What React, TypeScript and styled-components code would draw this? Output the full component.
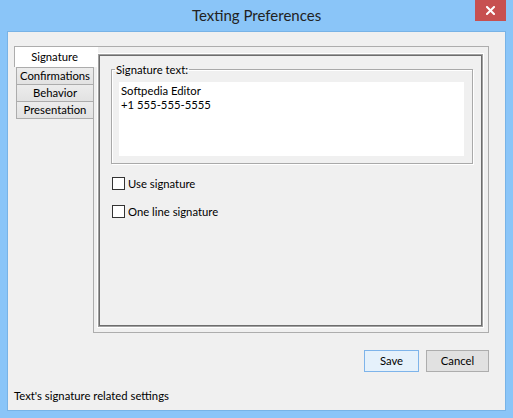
import React from 'react'
import styled, { createGlobalStyle } from 'styled-components'

const font = `"Segoe UI", Lato, "Noto Sans", sans-serif`

const GlobalStyle = createGlobalStyle`
  html, body {
    margin: 0;
    padding: 0;
    background: #8ac5f8;
  }
`

const tabs = ['Signature', 'Confirmations', 'Behavior', 'Presentation']

const CloseIcon = () => (
  <svg width="9" height="9" viewBox="0 0 9 9">
    <path d="M1 1 L8 8 M8 1 L1 8" stroke="#fff" strokeWidth="2" strokeLinecap="square" />
  </svg>
)

const App = () => {
  return (
    <Window>
      <GlobalStyle />
      <TitleBar>
        <TitleSpacer />
        <Title>Texting Preferences</Title>
        <CloseButton>
          <CloseIcon />
        </CloseButton>
      </TitleBar>
      <Client>
        <TabArea>
          <TabList>
            {tabs.map((t, i) => (
              <Tab key={t} active={i === 0}>
                {t}
              </Tab>
            ))}
          </TabList>
          <Panel>
            <InnerBox>
              <GroupBox>
                <Legend>Signature text:</Legend>
                <TextArea>
                  <div>Softpedia Editor</div>
                  <div>+1 555-555-5555</div>
                </TextArea>
              </GroupBox>
              <CheckRow>
                <CheckBox />
                <CheckLabel>Use signature</CheckLabel>
              </CheckRow>
              <CheckRow>
                <CheckBox />
                <CheckLabel>One line signature</CheckLabel>
              </CheckRow>
            </InnerBox>
          </Panel>
        </TabArea>
        <ButtonRow>
          <Button primary width={55}>
            Save
          </Button>
          <Button width={63}>Cancel</Button>
        </ButtonRow>
        <StatusText>Text's signature related settings</StatusText>
      </Client>
    </Window>
  )
}

const Window = styled.div`
  width: 513px;
  height: 418px;
  box-sizing: border-box;
  background: #8ac5f8;
  padding: 0 7px 7px 7px;
  display: flex;
  flex-direction: column;
  font-family: ${font};
  font-size: 11.3px;
  color: #000;
`

const TitleBar = styled.div`
  height: 31px;
  display: flex;
  align-items: flex-start;
  margin: 0 -7px;
`

const TitleSpacer = styled.div`
  width: 38px;
`

const Title = styled.div`
  flex: 1;
  text-align: center;
  font-size: 15px;
  line-height: 30px;
  color: #222;
`

const CloseButton = styled.div`
  width: 31px;
  height: 21px;
  margin-right: 7px;
  background: #c75050;
  display: flex;
  align-items: center;
  justify-content: center;
`

const Client = styled.div`
  flex: 1;
  background: #f0f0f0;
  border: 1px solid #78b3e6;
  display: flex;
  flex-direction: column;
  padding: 14px 16px 4px 6px;
`

const TabArea = styled.div`
  display: flex;
  align-items: flex-start;
`

const TabList = styled.div`
  width: 79px;
  display: flex;
  flex-direction: column;
  align-items: flex-start;
`

const Tab = styled.div<{ active?: boolean }>`
  box-sizing: border-box;
  position: relative;
  text-align: center;
  ${(p) =>
    p.active
      ? `
    z-index: 1;
    width: 84px;
    height: 21px;
    line-height: 20px;
    padding-right: 4px;
    background: #fff;
    border: 1px solid #adadad;
    border-right: none;
    border-bottom: none;
  `
      : `
    width: 78px;
    height: 18px;
    line-height: 16px;
    margin-left: 2px;
    margin-top: -1px;
    background: linear-gradient(#ececec, #e2e2e2);
    border: 1px solid #acacac;
  `}
  &:nth-child(2) {
    margin-top: 0;
  }
`

const Panel = styled.div`
  box-sizing: border-box;
  width: 396px;
  height: 287px;
  border: 1px solid #adadad;
  padding: 6px 4px 4px 3px;
  display: flex;
`

const InnerBox = styled.div`
  flex: 1;
  border: 1px solid #fff;
  box-shadow: inset 0 0 0 1px #a0a0a0, inset 0 0 0 2px #6d6d6d;
  padding: 8px 10px 0 13px;
`

const GroupBox = styled.fieldset`
  margin: 0;
  border: 1px solid #a9a9a9;
  box-shadow: inset 1px 1px 0 #fff, 1px 1px 0 #fff;
  padding: 5px 8px 7px 7px;
  min-width: 0;
`

const Legend = styled.legend`
  margin-left: -4px;
  padding: 0 1px;
  line-height: 15px;
`

const TextArea = styled.div`
  background: #fff;
  height: 74px;
  padding: 2px 2px 0;
  box-sizing: border-box;
  line-height: 14px;
`

const CheckRow = styled.div`
  display: flex;
  align-items: center;
  height: 15px;
  margin-top: 13px;
  margin-left: 1px;
  &:first-of-type {
    margin-top: 12px;
  }
`

const CheckBox = styled.span`
  width: 13px;
  height: 13px;
  box-sizing: border-box;
  border: 1px solid #333;
  background: #fff;
  margin-right: 3px;
`

const CheckLabel = styled.span`
  line-height: 15px;
`

const ButtonRow = styled.div`
  display: flex;
  justify-content: flex-end;
  gap: 7px;
  margin-top: 17px;
`

const Button = styled.div<{ primary?: boolean; width: number }>`
  box-sizing: border-box;
  width: ${(p) => p.width}px;
  height: 22px;
  line-height: 20px;
  text-align: center;
  border: 1px solid ${(p) => (p.primary ? '#7eb4ea' : '#adadad')};
  background: ${(p) => (p.primary ? '#e5f1fb' : '#e1e1e1')};
`

const StatusText = styled.div`
  margin-top: auto;
  line-height: 15px;
  padding-bottom: 3px;
`

export default App
